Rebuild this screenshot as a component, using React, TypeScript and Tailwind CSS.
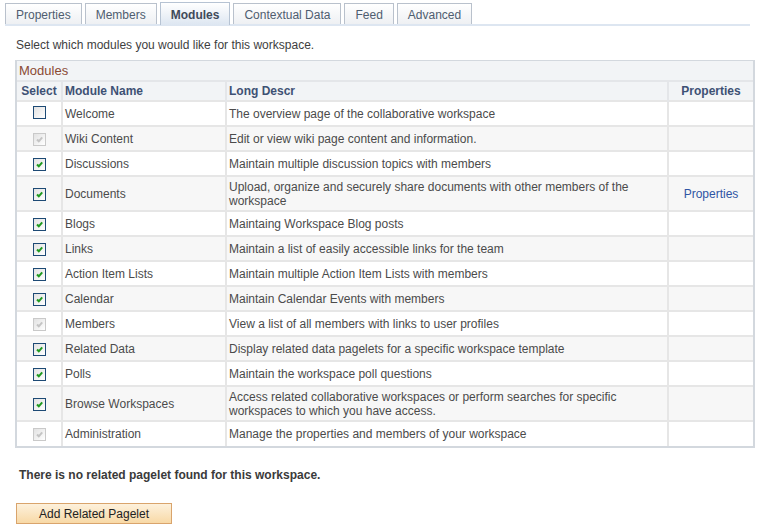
import React from "react"

type Row = {
  name: string
  descr: string
  state: "off" | "on" | "locked"
  tall?: boolean
  props?: boolean
}

const rows: Row[] = [
  { name: "Welcome", descr: "The overview page of the collaborative workspace", state: "off" },
  { name: "Wiki Content", descr: "Edit or view wiki page content and information.", state: "locked" },
  { name: "Discussions", descr: "Maintain multiple discussion topics with members", state: "on" },
  { name: "Documents", descr: "Upload, organize and securely share documents with other members of the workspace", state: "on", tall: true, props: true },
  { name: "Blogs", descr: "Maintaing Workspace Blog posts", state: "on" },
  { name: "Links", descr: "Maintain a list of easily accessible links for the team", state: "on" },
  { name: "Action Item Lists", descr: "Maintain multiple Action Item Lists with members", state: "on" },
  { name: "Calendar", descr: "Maintain Calendar Events with members", state: "on" },
  { name: "Members", descr: "View a list of all members with links to user profiles", state: "locked" },
  { name: "Related Data", descr: "Display related data pagelets for a specific workspace template", state: "on" },
  { name: "Polls", descr: "Maintain the workspace poll questions", state: "on" },
  { name: "Browse Workspaces", descr: "Access related collaborative workspaces or perform searches for specific workspaces to which you have access.", state: "on", tall: true },
  { name: "Administration", descr: "Manage the properties and members of your workspace", state: "locked" },
]

const tabs = ["Properties", "Members", "Modules", "Contextual Data", "Feed", "Advanced"]

function Check({ state }: { state: Row["state"] }) {
  const locked = state === "locked"
  return (
    <span
      className={`inline-flex h-[13px] w-[13px] items-center justify-center border bg-gradient-to-br from-[#e2e2e2] to-white ${
        locked ? "border-[#c9c9c9]" : "border-[#1d4a75]"
      }`}
    >
      {state !== "off" && (
        <svg width="9" height="9" viewBox="0 0 9 9">
          <path
            d="M2 4.5 L3.8 6.3 L7.2 2.3"
            fill="none"
            stroke={locked ? "#c4c4c4" : "#1f9a1f"}
            strokeWidth="2"
          />
        </svg>
      )}
    </span>
  )
}

export default function App() {
  return (
    <div className="h-[526px] w-[762px] overflow-hidden bg-white font-['Liberation_Sans',Arial,sans-serif] text-[12px] text-[#4b4b4b]">
      {/* tab strip */}
      <div className="ml-[5px] mt-[3px] flex w-[745px] gap-[3px] border-b-2 border-[#dde6f1]">
        {tabs.map((t) =>
          t === "Modules" ? (
            <div
              key={t}
              className="-mb-[2px] -mt-[1px] flex h-[23px] items-center border border-b-0 border-[#b6c3d3] bg-gradient-to-b from-white to-[#dde6f1] px-[10px] pt-[1px] font-bold text-[#3f4a5a]"
            >
              {t}
            </div>
          ) : (
            <div
              key={t}
              className="flex h-[21px] items-center border border-b-0 border-[#b9c1cc] bg-gradient-to-b from-white to-[#eef0f3] px-[10px] pt-[1px] text-[#4f5d70]"
            >
              {t}
            </div>
          )
        )}
      </div>

      <p className="ml-[16px] mt-[12px] leading-[14px] text-[#3e3e3e]">
        Select which modules you would like for this workspace.
      </p>

      {/* modules grid */}
      <div className="ml-[15px] mt-[8px] w-[740px] border-2 border-[#d3d8de] border-t-[1px]">
        <div className="flex h-[19px] items-center bg-[#f2f4f6] pl-[2px] text-[13px] text-[#8a4a34]">Modules</div>
        <table className="w-full table-fixed border-collapse">
          <colgroup>
            <col className="w-[45px]" />
            <col className="w-[164px]" />
            <col className="w-[442px]" />
            <col />
          </colgroup>
          <thead>
            <tr className="h-[19px] bg-[#f2f4f6] font-bold text-[#3e5174]">
              <th className="border-r-2 border-t-2 border-[#e4e6e9] text-center">Select</th>
              <th className="border-r-2 border-t-2 border-[#e4e6e9] pl-[2px] text-left">Module Name</th>
              <th className="border-r-2 border-t-2 border-[#e4e6e9] pl-[2px] text-left">Long Descr</th>
              <th className="border-t-2 border-[#e4e6e9] text-center">Properties</th>
            </tr>
          </thead>
          <tbody>
            {rows.map((r, i) => (
              <tr
                key={r.name}
                className={`${r.tall ? "h-[35px]" : "h-[25px]"} ${i % 2 === 1 ? "bg-[#f7f7f7]" : "bg-white"}`}
              >
                <td className="border-r-2 border-t-2 border-[#e6e6e6] text-center align-middle">
                  <span className="relative top-[1px] inline-flex">
                    <Check state={r.state} />
                  </span>
                </td>
                <td className="border-r-2 border-t-2 border-[#e6e6e6] pl-[2px] align-middle">{r.name}</td>
                <td className="border-r-2 border-t-2 border-[#e6e6e6] pl-[2px] pr-[6px] align-middle leading-[14px]">
                  {r.descr}
                </td>
                <td className="border-t-2 border-[#e6e6e6] text-center align-middle text-[#2f55a4]">
                  {r.props ? "Properties" : ""}
                </td>
              </tr>
            ))}
          </tbody>
        </table>
      </div>

      <p className="ml-[19px] mt-[20px] font-bold leading-[14px] text-[#3a3a3a]">
        There is no related pagelet found for this workspace.
      </p>

      <button className="ml-[16px] mt-[21px] flex h-[21px] w-[156px] items-center justify-center border border-[#d9a46c] bg-gradient-to-b from-[#fdf1dc] to-[#f8d9a6] text-[12px] text-[#222]">
        Add Related Pagelet
      </button>
    </div>
  )
}
